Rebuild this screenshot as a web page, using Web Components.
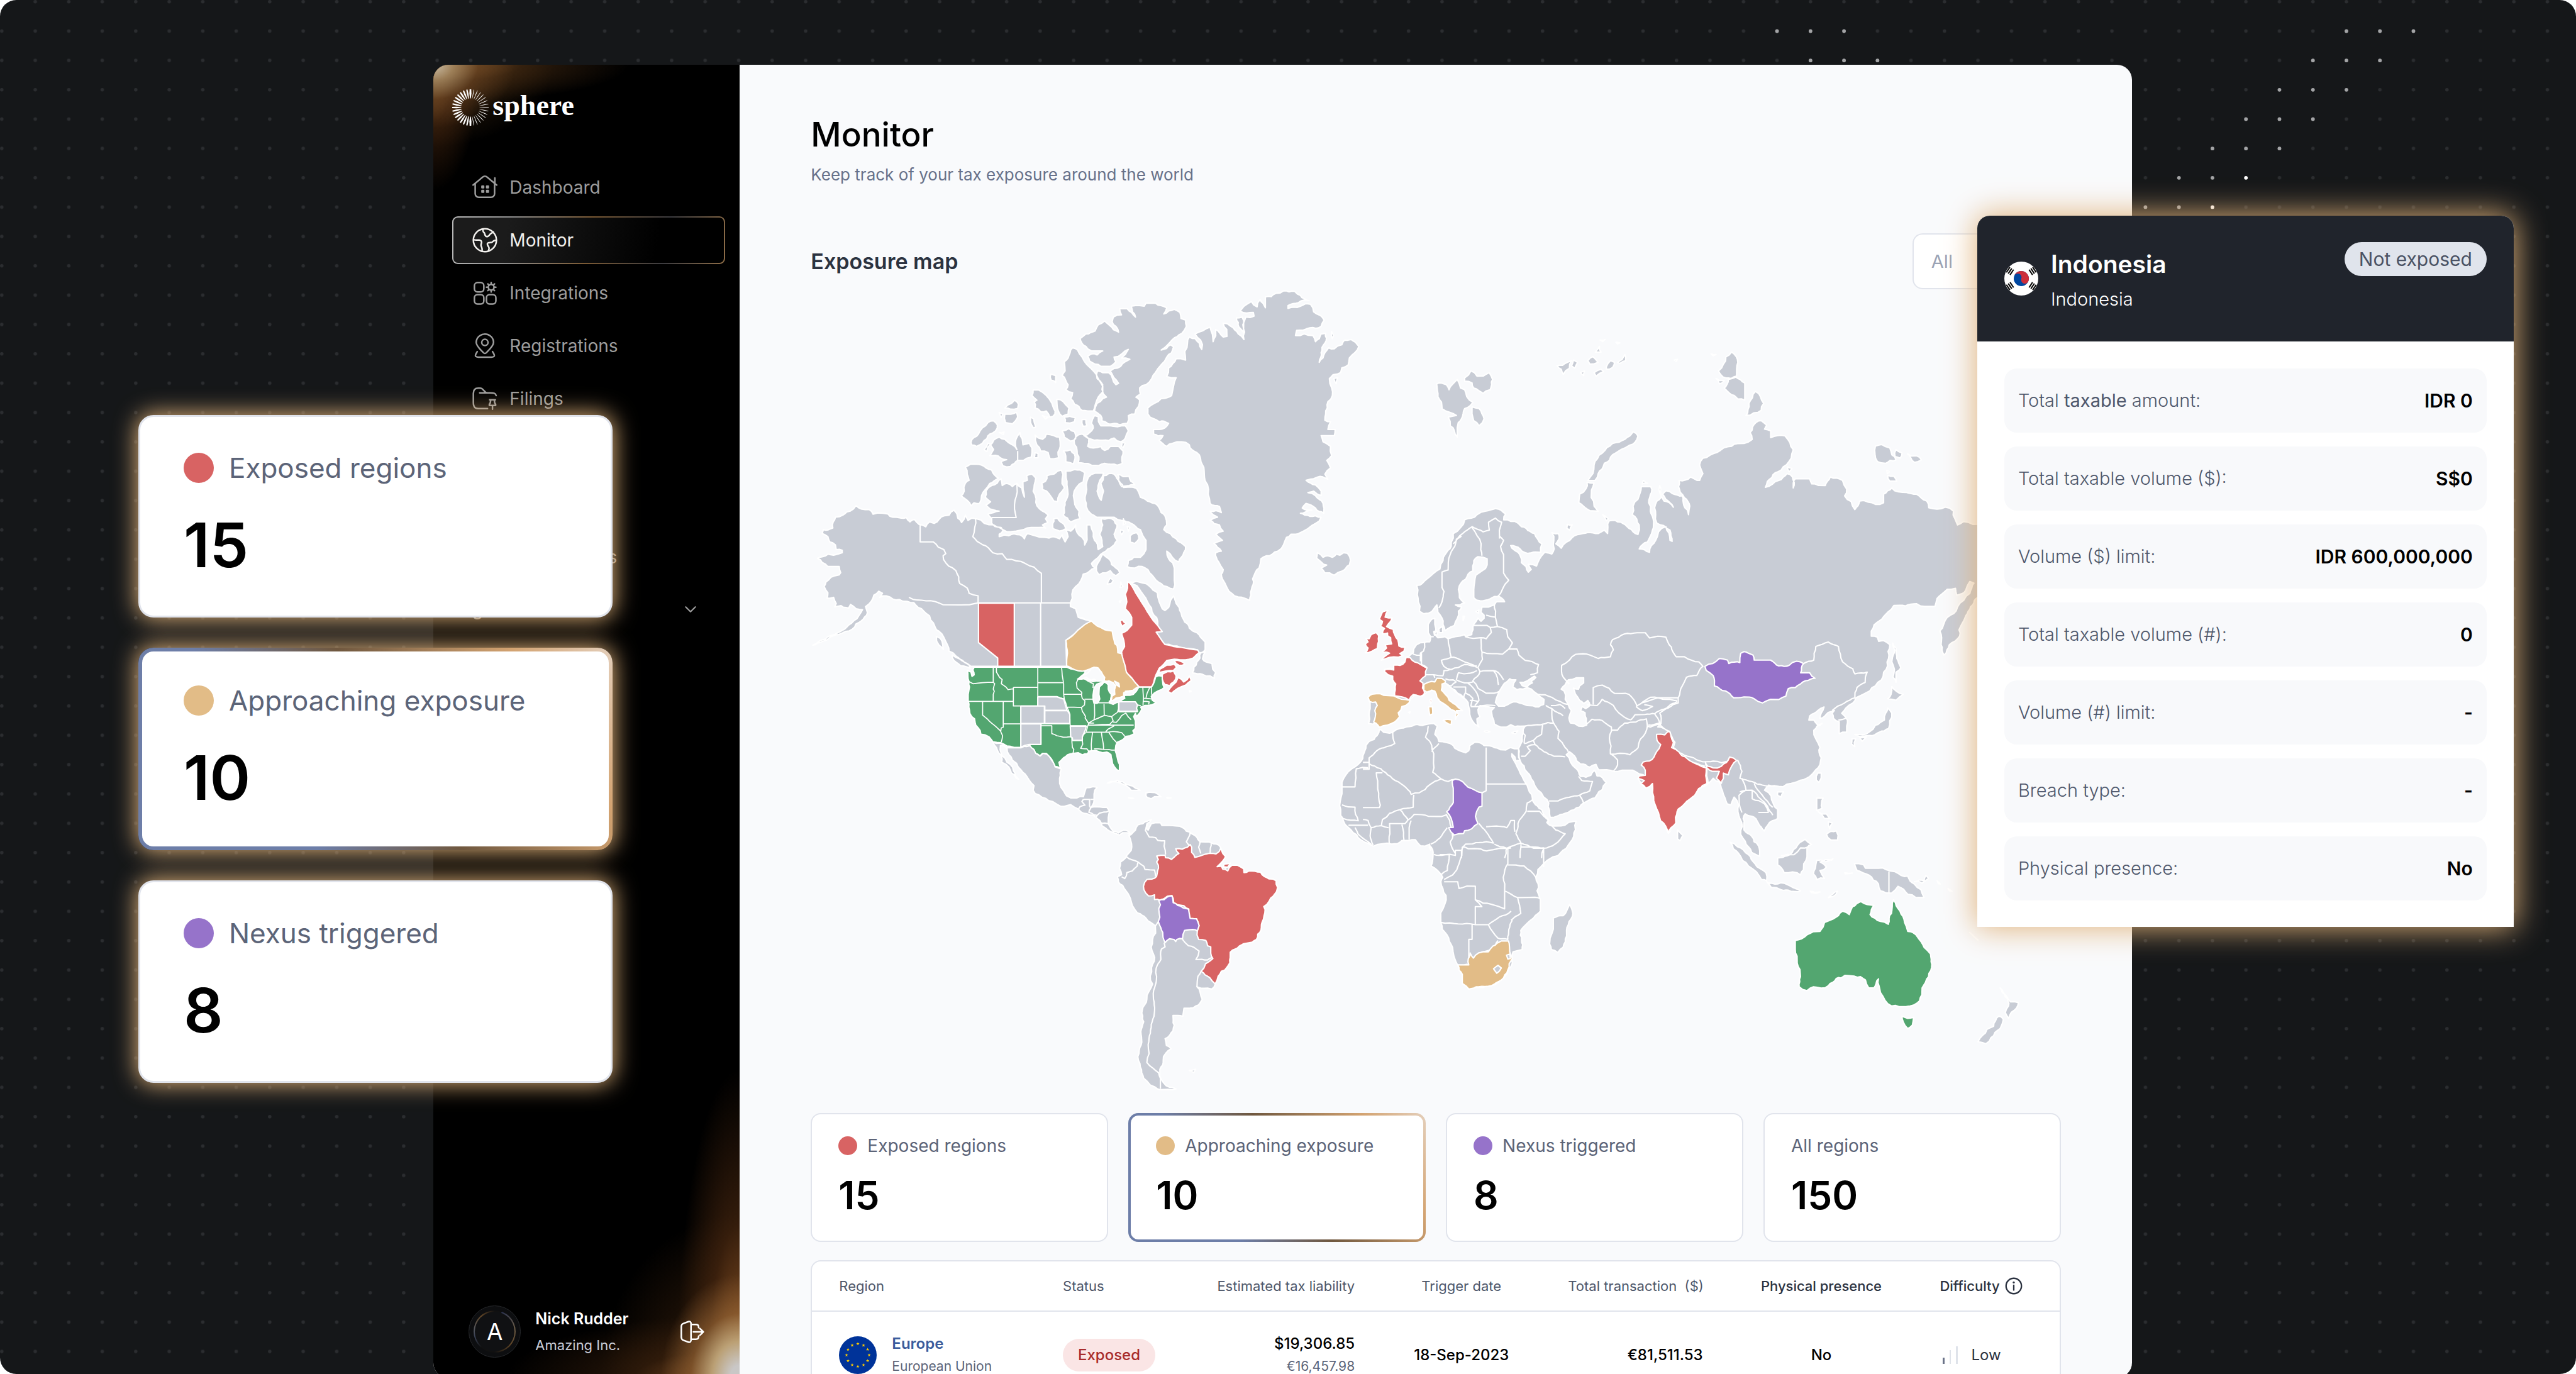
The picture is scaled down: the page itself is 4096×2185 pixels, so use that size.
<!DOCTYPE html>
<html lang="en">
<head>
<meta charset="utf-8">
<title>Sphere – Monitor</title>
<style>
html,body{margin:0;background:#fff;font-family:Inter,"Liberation Sans",sans-serif}
</style>
</head>
<body>
<monitor-page></monitor-page>
<script>
const define=(name,html,setup)=>{
  const t=document.createElement('template');t.innerHTML=html;
  customElements.define(name,class extends HTMLElement{
    constructor(){super();this.attachShadow({mode:'open'}).append(t.content.cloneNode(true));}
    connectedCallback(){if(setup&&!this.ready){this.ready=true;setup(this,this.shadowRoot);}}
  });
};

/* ---------- icons ---------- */
const ICONS={
home:'<path d="M1.5 19.5 20 4.200a6 6 0 0 1 8 0l18.500 15.300M43 6v11M5.500 17v19a7 7 0 0 0 7 7h23a7 7 0 0 0 7-7V17"/><g fill="currentColor" stroke="none"><rect x="17" y="20" width="6" height="6" rx="1.500"/><rect x="26" y="20" width="6" height="6" rx="1.500"/><rect x="17" y="28.500" width="6" height="6" rx="1.500"/><rect x="26" y="28.500" width="6" height="6" rx="1.500"/></g>',
globe:'<circle cx="24" cy="24" r="22"/><path d="M20.500 2.500c-1 4 0 5.500 2 7 1.500 1.500 1 3 2 5 1 2.500 3 3 5.500 2 2.500-1 3-4 6-5.500 2-1.500 3.500-1.500 4-3M2.500 23c3 1.500 7 .5 10.500.8 3.500.4 5 2.200 4.500 5.200-.5 2.500-1.500 3.800-.5 6.500 1 2.500 2.500 4.500 1.500 9.500M45.500 24c-3.500-.5-5.500 1.500-7.500 3.500-2 1.500-5 .5-7.500 1.500-2.500.8-2 2.500-1 5 1 2 2.500 2.500 2.500 5.500 0 2-1 3-1.500 5.200"/>',
grid:'<rect x="4" y="4" width="18" height="18" rx="6"/><rect x="4" y="27" width="18" height="18" rx="6"/><rect x="27" y="27" width="18" height="18" rx="6"/><circle cx="36" cy="13" r="5.500"/><path d="M36 7.500V4m0 18v-3.500M30.500 13H27m18 0h-3.500M32.100 9.100l-2.500-2.500m12.800 12.800-2.500-2.500m0-7.800 2.500-2.500M29.600 19.400l2.500-2.500"/>',
pin:'<path d="M24 38.500c-2 0-2.600-1.400-4.500-3.200C12 28 7.500 23 7.500 17.500a16.500 16 0 0 1 33 0C40.500 23 36 28 28.500 35.300c-1.900 1.800-2.500 3.200-4.500 3.200Z"/><circle cx="24" cy="17.500" r="6"/><path d="M9.500 35c-2 3-5 7-3 9 1 1.500 3 1.500 5 1.500h25c2 0 4 0 5-1.500 2-2-1-6-3-9"/>',
folder:'<path d="M14 13h20c7 0 10 0 11.500 5M29 43H15C5 43 2 41 2 31V14C2 7 5 4 11 4h4c7 0 7 9 14 9"/><path d="M33 26h11M35 26c0 4 0 6-2.500 9v2h12v-2C42 32 42 30 42 26M38.500 37v7"/>',
logout:'<path d="M17.500 4.500 8 8c-3 1-4 3-4 6v20c0 3 1 5 4 6l9.500 3.500c3 1 5-.5 5-3.500V8c0-3-2-4.500-5-3.500ZM22.500 10H32c3 0 5 2 5 5v1M37 32v1c0 3-2 5-5 5h-9.500M27 24h19m-6.500-6.500L46 24l-6.500 6.500"/>',
chevron:'<path d="m10 17 14 14 14-14"/>',
info:'<circle cx="24" cy="24" r="21"/><path d="M24 22v13"/><circle cx="24" cy="14.500" r="2.800" fill="currentColor" stroke="none"/>'
};
define('ui-icon','<style>:host{display:block;width:40px;height:40px;flex:none}svg{display:block;width:100%;height:100%;overflow:visible;stroke-width:var(--w,3)}</style><svg viewBox="0 0 48 48" fill="none" stroke="currentColor" stroke-linecap="round" stroke-linejoin="round" aria-hidden="true"></svg>',
(h,r)=>{r.querySelector('svg').innerHTML=ICONS[h.getAttribute('name')]});

/* ---------- sidebar ---------- */
define('brand-logo',`<style>:host{display:flex;align-items:center;gap:6px;color:#fff;height:58px}
svg{width:58px;height:58px}span{font:700 46px/58px "Liberation Serif",serif;padding-bottom:6px}</style><svg viewBox="-34 -34 68 68" fill="#fff" aria-hidden="true"></svg><span>sphere</span>`,
(h,r)=>{let s='';for(let i=0;i<32;i++){const a=i*11.25,c=Math.sin(a*Math.PI/180),w=Math.abs(c)<.05?1.900:c<0?1.500:.6;
 s+=`<path transform="rotate(${a})" d="M${-w*.4} -17L${-w} -26L${-w*.8} -34H${w*.8}L${w} -26L${w*.4} -17z"/>`}
 r.querySelector('svg').innerHTML=s});

define('nav-item',`<style>:host{display:block;color:#9d9d9d}
a{display:flex;align-items:center;gap:19px;height:76px;box-sizing:border-box;padding:0 30px;border:2px solid transparent;border-radius:9px;color:inherit;text-decoration:none;font-size:28px;line-height:36px}
:host([current]){color:#f3f1ee}
:host([current]) a{background:linear-gradient(100deg,#1b1b1b 20%,#000 75%) padding-box,linear-gradient(100deg,#b9b9b9,#8d8d8d 22%,#7b5a34 50%,#3c3c40 78%,#8e6d47) border-box}
:host([inset]) a{padding-left:90px}
</style><a href="#"><slot name="icon"></slot><slot></slot></a>`,(h,r)=>{if(h.hasAttribute('current'))r.querySelector('a').setAttribute('aria-current','page')});

define('side-bar',`<style>
:host{display:flex;flex-direction:column;box-sizing:border-box;width:487px;flex:none;padding:39px 23px 32px 30px;
background:radial-gradient(ellipse 130px 100px at 0 0,#cbbfa8,#a98c64d0 25%,#6f472480 55%,transparent),
radial-gradient(ellipse 310px 60px at 0 0,#7d5328,#4a2e14a0 45%,transparent),
radial-gradient(ellipse 75px 200px at 0 0,#7d5328,#4a2810a0 45%,transparent),
radial-gradient(ellipse 190px 130px at 0 0,#402810,transparent),
radial-gradient(ellipse 125px 165px at 100% 100%,#c9c7c6 12%,#c0a67af0 35%,#9c6a3890 62%,transparent),
radial-gradient(ellipse 100px 490px at 100% 100%,#8a5426,#4a2810b0 50%,transparent),
radial-gradient(ellipse 370px 100px at 100% 100%,#7d4d24,#40240e90 45%,transparent),
radial-gradient(ellipse 220px 260px at 100% 100%,#3c220d,transparent),#000}
nav{display:flex;flex-direction:column;gap:8px;margin-top:60px}
.last{margin-top:168px}
.group{display:flex;align-items:center;justify-content:space-between;height:74px;border:0;background:none;color:#9d9d9d;font:400 28px/36px Inter,sans-serif;padding:0 42px 0 0}
.group ui-icon{width:26px;height:26px;--w:4}
footer{display:flex;align-items:center;margin-top:auto;padding:0 33px 0 26px}
.avatar{width:83px;height:83px;box-sizing:border-box;border:1px solid #26282b;border-radius:50%;background:#0d0e10;display:grid;place-items:center;flex:none}
.avatar span{width:67px;height:67px;box-sizing:border-box;border:2px solid transparent;border-radius:50%;display:grid;place-items:center;color:#fff;font-size:37px;line-height:40px;
background:linear-gradient(#101113,#101113) padding-box,conic-gradient(from 20deg,#2c3450,#6a5c48 60deg,#5e4426 110deg,#111 160deg,#111 200deg,#3a4256 235deg,#55565a 260deg,#5e4426 300deg,#111 340deg) border-box}
.who{flex:1;margin-left:23px;display:flex;flex-direction:column;gap:6px}
b{color:#fff;font-weight:600;font-size:25px;line-height:36px}
small{color:#c9cdd8;font-size:22px;line-height:36px}
.out{border:0;background:none;padding:0;color:#fff}
</style>
<brand-logo></brand-logo>
<nav aria-label="Main">
<nav-item><ui-icon slot="icon" name="home"></ui-icon>Dashboard</nav-item>
<nav-item current><ui-icon slot="icon" name="globe"></ui-icon>Monitor</nav-item>
<nav-item><ui-icon slot="icon" name="grid"></ui-icon>Integrations</nav-item>
<nav-item><ui-icon slot="icon" name="pin"></ui-icon>Registrations</nav-item>
<nav-item><ui-icon slot="icon" name="folder"></ui-icon>Filings</nav-item>
<nav-item class="last" inset>Transactions</nav-item>
<button class="group" type="button">Organization<ui-icon name="chevron"></ui-icon></button>
</nav>
<footer><div class="avatar"><span>A</span></div><div class="who"><b>Nick Rudder</b><small>Amazing Inc.</small></div><button class="out" type="button" aria-label="Log out"><ui-icon name="logout"></ui-icon></button></footer>`);

/* ---------- stat card ---------- */
define('stat-card',`<style>
:host{display:block;box-sizing:border-box;height:205px;--b:2px;--px:44px;border:var(--b) solid #e1e4ec;border-radius:16px;background:#fff;padding:calc(33px - var(--b)) calc(var(--px) - var(--b))}
:host([active]){--b:4px;border-color:transparent;background:linear-gradient(#fff,#fff) padding-box,linear-gradient(58deg,#6d7ea8 30%,#70583f 54%,#d3a371 83%,#e4cfbb) border-box}
p{margin:0;display:flex;align-items:center;gap:16px;color:#5c6478;font-size:28px;line-height:38px}
i{width:30px;height:30px;border-radius:50%;flex:none;background:var(--dot)}
strong{display:block;margin-top:22px;color:#000;font-weight:600;font-size:62px;line-height:76px}
:host([size=large]){height:322px;--b:3px;--px:72px;border-radius:24px;padding:calc(59px - var(--b)) calc(var(--px) - var(--b));box-shadow:0 0 36px 2px rgb(224,178,122)}
:host([size=large][active]){--b:6px}
:host([size=large]) p{gap:24px;font-size:44px;line-height:50px}
:host([size=large]) i{width:48px;height:48px}
:host([size=large]) strong{margin-top:42px;font-size:98px;line-height:112px}
:host([tone=red]){--dot:#d86363}:host([tone=amber]){--dot:#e2bc87}:host([tone=violet]){--dot:#9673ca}
</style><p><i></i><span><slot></slot></span></p><strong></strong>`,(h,r)=>{r.querySelector('strong').textContent=h.getAttribute('value');if(!h.hasAttribute('tone'))r.querySelector('i').remove()});

/* ---------- map ----------
   Outlines are written in the coordinates of five survey sheets; each letter
   in a string switches the sheet, and all of them land in one plane. */
const SHEET={A:[1480,520,.7015,.574],B:[1780,1200,.3954,.3954],C:[2500,520,.7653,.6378],D:[2540,1000,.38265,.38265],E:[1980,1400,1.2117,.4209]};
let sheet=SHEET.A;
const pts=s=>{const o=[];for(const t of s.trim().split(/\s+/)){if(SHEET[t]){sheet=SHEET[t];continue}const [x,y]=t.split(',').map(Number);o.push([sheet[0]+x*sheet[2],sheet[1]+y*sheet[3]])}return o};
const rough=(a,b,k,out)=>{const dx=b[0]-a[0],dy=b[1]-a[1],l=Math.hypot(dx,dy);
 if(l<9||k===0||Math.abs(dx)<.6||Math.abs(dy)<.6){out.push(b);return}
 const h=Math.sin((a[0]+b[0])*12.9898+(a[1]+b[1])*78.233)*43758.5453,f=(h-Math.floor(h)-.5)*2*k;
 const s=(dx>0||(dx===0&&dy>0))?1:-1,m=[(a[0]+b[0])/2-dy*f*s,(a[1]+b[1])/2+dx*f*s];
 rough(a,m,k,out);rough(m,b,k,out)};
const line=(s,k,close)=>{const p=pts(s),o=[p[0]];for(let i=1;i<p.length;i++)rough(p[i-1],p[i],k,o);if(close)rough(p[p.length-1],p[0],k,o);
 return 'M'+o.map(q=>q[0].toFixed(1)+' '+q[1].toFixed(1)).join('L')+(close?'Z':'')};
const path=(list,k,close)=>list.split(';').filter(x=>x.trim()).map(s=>line(s,k,close)).join('');

const LAND=`A 165,737 178,748 200,750 210,765 235,762 262,775 285,778 298,776 308,790 320,782 332,798 350,806 360,790 372,795 385,782 400,770 412,768 425,752 435,778 445,792 455,768 462,785 472,778 484,780 505,795 530,800 550,808 555,818 545,830 545,838 570,835 600,832 612,845 620,828 640,835 665,840 690,838 705,845 712,832 720,855 728,838 722,815 735,820 748,800 752,825 765,840 772,865 778,830 778,800 788,800 795,825 798,850 808,880 820,870 818,850 812,830 820,800 816,780 835,778 850,785 858,800 850,830 858,850 840,875 828,885 815,895 808,905 790,925 800,940 785,950 768,960 762,980 748,1000 738,1025 735,1050 734,1065 748,1072 755,1100 775,1108 790,1112 722,1175 724,1259 470,1259 460,1250 445,1240 430,1225 412,1210 408,1190 398,1165 385,1145 370,1118 360,1095 345,1080 330,1068 318,1052 300,1048 280,1042 262,1040 245,1030 228,1035 235,1022 225,1015 212,1028 205,1048 190,1065 195,1085 178,1112 155,1138 120,1155 75,1178 50,1190 70,1175 95,1160 120,1148 135,1138 145,1125 160,1110 172,1095 182,1075 165,1072 150,1058 145,1070 138,1068 125,1062 108,1066 112,1055 105,1035 88,1038 90,1020 85,1012 80,1000 85,985 98,970 120,962 124,955 120,935 90,935 75,922 62,908 90,895 105,898 128,890 128,882 112,880 110,865 95,855 90,838 75,828 78,815 103,810 104,790 110,775 130,768 140,758 158,748;
893,985 925,988 945,1000 965,1020 970,1050 978,1072 985,1078 995,1068 1000,1045 1008,1030 1015,1055 1028,1085 1035,1108 1050,1135 1070,1150 1080,1165 1092,1180 1092,1205 1082,1215 1075,1214 1072,1206 985,1188 962,1148 978,1146;
1080,1216 1092,1212 1085,1235 1095,1245 1110,1250 1112,1268 1120,1280 1116,1298 1105,1290 1085,1285 1058,1280 1062,1262 1070,1245;
420,1222 440,1235 465,1255 468,1266 450,1258 425,1240;378,1162 388,1168 397,1205 385,1190;
455,612 485,603 510,615 525,622 543,648 520,665 508,685 498,705 493,730 478,728 470,738 460,720 444,706 452,690 455,665 465,655 460,635;
510,690 525,672 550,650 553,672 565,665 580,675 592,665 605,680 612,710 608,660 620,655 618,640 632,635 642,648 638,670 635,690 643,715 645,738 660,755 675,768 668,780 674,792 660,800 668,810 650,808 630,808 610,815 590,820 565,822 545,808 525,795 525,778 515,765 530,760 545,755 515,742 510,735 522,725 508,710;
472,540 470,532 490,505 500,485 515,468 530,462 540,475 535,495 520,505 512,520 500,535 485,545;
520,575 530,555 522,540 530,525 545,515 560,522 580,540 592,555 590,520 600,500 606,520 608,540 625,535 632,550 630,580 610,590 595,590 575,610 555,608 550,595 565,588 548,582;
505,555 515,535 522,537 512,562;560,420 578,405 586,395 596,408 594,422 575,424;560,440 590,434 594,450 580,472 562,468;545,435 555,440 550,452;545,500 558,498 556,506;
635,362 650,362 670,380 685,405 693,440 680,450 670,430 655,432 640,420 638,400 645,395 632,380;660,445 675,450 668,456;698,392 715,400 730,420 728,440 712,447 702,430;718,450 747,452 745,465 720,468;765,458 775,458 778,478 768,480;628,450 636,455 642,482 636,485;682,310 695,315 695,338 683,330;
640,508 660,522 670,505 690,510 705,515 707,545 703,582 680,585 675,565 655,560 645,540;640,565 648,568 648,582 638,582;
715,560 735,556 745,570 742,602 722,595;712,495 730,487 745,497 748,520 735,528 718,515;
748,515 765,505 783,520 780,545 795,550 815,545 825,558 840,545 862,545 874,560 872,600 858,606 825,600 810,607 790,606 770,600 755,598 752,560;
770,510 785,500 795,485 790,470 798,445 808,448 815,478 830,478 848,480 870,478 880,478 888,495 880,518 868,530 850,518 820,525 790,522;872,532 879,535 875,548 870,545;
740,225 753,232 765,255 778,280 795,300 808,325 820,350 820,368 808,385 800,410 795,430 765,428 745,408 735,390 740,370 722,360 728,345 712,315 720,300 718,270 728,258;
930,90 935,80 960,80 990,95 982,115 1010,100 1025,110 1028,130 1040,135 1042,155 1030,178 1005,198 975,232 1000,215 1008,222 990,255 975,280 960,305 950,325 935,345 918,355 920,375 908,385 918,395 915,415 905,440 888,445 885,470 865,475 835,472 818,462 815,445 798,430 805,405 820,390 830,385 818,360 820,345 805,325 806,300 835,305 855,345 862,340 840,300 850,292 880,270 892,262 870,258 888,230 870,245 850,255 855,270 840,285 815,285 800,278 785,268 780,252 790,245 805,248 820,235 790,235 775,220 765,210 760,195 775,180 800,170 808,150 825,138 838,152 862,174 845,140 848,125 870,118 865,98 885,98 907,125 896,90 918,88;
722,625 745,620 772,630 768,660 750,678 742,705 745,725 757,755 760,780 745,785 735,790 715,768 720,735 728,700 725,670;
672,640 690,635 700,625 710,622 712,650 718,680 705,700 700,725 690,722 678,700 660,685 658,665 668,658;
782,645 800,632 822,632 812,655 805,690 816,720 822,690 815,665 822,640 850,635 858,650 875,678 910,682 920,710 945,725 970,745 985,770 990,800 982,815 1015,845 1040,870 1035,890 1022,920 1005,905 990,885 995,910 1010,940 1010,980 1008,1008 990,1000 962,980 940,945 925,935 905,940 885,935 888,915 920,905 935,880 935,850 920,815 895,795 870,785 850,775 820,775 790,765 776,740 775,700 776,670;
860,636 890,642 905,670 890,672 870,675 862,655;820,895 838,912 855,940 865,955 855,965 840,948 830,955 810,962 803,935;840,972 848,980 843,990 832,992;868,985 874,1000 866,1003;893,835 910,825 916,845 905,860 893,855;690,780 700,778 718,800 722,812 705,820 688,812;875,780 880,795 874,800;885,805 892,808 888,820;868,815 876,820 870,832;
1252,60 1280,48 1300,40 1330,42 1345,55 1368,72 1340,78 1312,88 1312,97 1345,90 1372,84 1380,108 1398,120 1408,135 1400,155 1370,160 1335,168 1332,185 1355,180 1378,185 1385,205 1400,180 1412,178 1410,210 1400,240 1395,272 1405,258 1420,225 1435,228 1455,215 1462,200 1480,198 1500,220 1490,240 1475,258 1472,280 1455,290 1452,305 1432,312 1422,325 1428,355 1430,380 1418,400 1412,440 1410,460 1425,465 1418,490 1437,490 1435,510 1400,510 1405,530 1425,545 1428,575 1415,590 1425,615 1410,635 1418,652 1390,645 1380,650 1360,655 1385,670 1400,690 1400,705 1380,690 1365,695 1385,705 1405,730 1407,762 1385,745 1360,730 1350,745 1375,752 1345,762 1370,772 1400,775 1385,795 1365,812 1345,825 1320,830 1308,840 1300,865 1285,885 1270,895 1255,900 1240,910 1235,940 1225,955 1218,975 1215,1010 1210,1045 1190,1035 1170,1030 1155,1015 1145,990 1135,960 1140,945 1128,920 1120,890 1135,885 1115,860 1138,850 1120,830 1140,820 1130,800 1105,785 1125,775 1105,755 1135,760 1130,740 1105,730 1100,700 1090,640 1085,605 1070,565 1050,540 1030,530 1005,535 990,545 970,525 980,510 955,505 955,490 985,485 995,470 970,465 955,455 940,440 940,420 975,390 1003,380 1008,350 1015,322 990,318 995,290 1015,260 1040,265 1045,210 1050,190 1065,195 1083,230 1080,200 1065,180 1085,170 1105,158 1113,205 1120,165 1140,190 1150,188 1140,145 1160,155 1180,180 1195,198 1192,150 1200,125 1222,122 1220,110 1185,105 1195,90 1215,75 1230,92 1238,68 1252,95;
1175,128 1190,125 1194,175 1182,158;1434,325 1444,322 1440,342;1428,172 1433,185 1430,195;
1390,890 1405,905 1418,900 1430,905 1440,895 1450,898 1460,890 1470,892 1478,915 1475,930 1455,950 1435,963 1410,955 1400,940 1415,930 1400,920 1388,908;
B 178,466 215,470 245,492 280,492 310,492 325,485 352,482 372,500 385,520 402,530 415,518 435,522 455,550 472,582 500,592 495,610 493,660 512,695 525,718 545,728 575,728 605,722 618,680 650,675 670,678 655,710 655,740 648,762 642,772 680,770 715,772 728,790 722,820 722,850 732,868 745,885 770,893 795,880 820,888 828,902 812,892 790,892 775,903 755,895 730,885 710,870 692,858 690,848 670,825 650,810 620,802 595,795 580,780 545,760 515,768 480,758 440,740 410,725 378,708 368,692 372,670 350,645 330,615 310,595 290,565 270,550 255,525 245,495 214,480 218,520 235,540 245,560 260,570 275,600 300,640 288,635 265,610 262,600 240,570 220,560 222,545 205,515 180,470;
718,658 735,650 765,645 790,652 820,668 850,682 872,692 830,692 820,680 790,662 760,652 740,652;900,705 930,702 955,710 970,722 940,722 925,732 905,725 900,718;818,727 842,730 832,732;998,726 1018,728 1000,730;
830,900 850,880 862,855 885,850 905,838 925,830 905,848 900,870 910,880 925,850 945,845 968,845 975,858 1010,858 1040,860 1060,862 1080,872 1090,885 1108,890 1112,895 1130,905 1145,925 1155,935 1205,938 1230,945 1252,962 1262,990 1275,1005 1262,1025 1245,1050 1275,1060 1300,1050 1330,1045 1360,1062 1362,1080 1385,1072 1440,1078 1480,1110 1513,1118 1520,1150 1515,1170 1500,1190 1480,1215 1455,1240 1453,1300 1442,1350 1420,1395 1400,1408 1360,1415 1320,1440 1297,1455 1295,1505 1270,1540 1255,1545 1240,1568 1226,1605 1210,1629 1140,1618 1155,1645 1165,1677 1134,1709 1079,1719 1073,1757 1027,1753 1033,1799 1011,1847 990,1863 996,1895 1018,1911 981,1964 965,2007 965,2039 1011,2092 1042,2099 965,2103 920,2081 889,2049 873,1996 867,1932 880,1879 889,1783 904,1677 926,1528 935,1464 944,1331 900,1295 860,1270 848,1255 830,1215 805,1165 790,1140 770,1125 765,1100 785,1090 782,1075 775,1060 780,1030 805,1010 808,1000 830,975 832,945 820,905;
C 375,672 400,688 395,705 430,715 470,745 488,775 485,800 460,802 435,790 412,780 430,800 438,830 455,858 462,850 455,835 475,840 482,820 495,800 512,805 518,790 512,742 528,745 530,760 522,775 535,788 548,770 575,748 600,742 625,745 640,735 648,745 652,708 680,712 700,730 722,748 725,720 708,690 710,665 722,645 730,608 753,608 755,625 748,655 752,680 760,710 755,745 745,770 725,790 750,800 765,765 772,740 790,725 800,765 805,768 800,735 785,722 768,715 765,690 768,650 778,640 775,605 785,650 808,668 800,655 782,630 790,620 805,628 830,635 845,690 848,665 835,640 825,625 822,590 850,580 872,590 880,570 872,545 880,525 915,508 950,490 980,482 1000,470 995,450 1010,420 1022,415 1035,428 1030,440 1045,445 1045,465 1080,460 1092,480 1100,500 1095,525 1070,560 1032,610 1065,590 1085,570 1098,580 1100,612 1105,585 1140,585 1145,600 1178,605 1190,580 1220,590 1230,615 1225,635 1250,675 1262,650 1300,660 1320,655 1320,630 1340,612 1375,625 1400,630 1425,650 1430,670 1470,668 1490,680 1500,720 1515,710 1560,715 1600,720 1600,900 1545,935 1520,985 1510,1010 1505,1045 1480,1070 1467,1100 1460,1070 1457,1030 1475,990 1500,960 1530,920 1540,890 1530,885 1520,910 1498,925 1495,905 1475,908 1450,935 1445,958 1420,958 1400,950 1345,955 1330,975 1310,1000 1290,1030 1290,1045 1305,1048 1308,1060 1320,1058 1335,1070 1332,1110 1320,1150 1300,1190 1270,1215 1252,1225 1245,1240 1228,1255 1218,1270 1232,1290 1230,1325 1212,1330 1212,1295 1198,1285 1195,1270 1200,1262 1185,1268 1165,1285 1168,1270 1175,1252 1160,1262 1140,1278 1138,1290 1150,1290 1160,1305 1170,1300 1150,1320 1155,1345 1165,1370 1168,1400 1155,1435 1140,1455 1110,1470 1095,1475 1075,1485 1055,1482 1040,1480 1030,1495 1046,1512 1062,1551 1062,1578 1038,1597 1030,1614 1015,1591 999,1571 983,1564 978,1578 980,1611 999,1630 1015,1657 1018,1688 999,1677 983,1644 972,1624 970,1578 967,1538 956,1515 948,1538 939,1535 928,1498 923,1479 920,1470 905,1460 893,1475 870,1490 860,1510 835,1535 820,1550 817,1558 814,1591 796,1621 777,1584 764,1538 758,1489 755,1480 740,1488 728,1472 722,1460 735,1450 715,1440 D 1300,1140 1225,1147 1148,1138 1135,1112 1105,1125 1060,1110 1030,1070 1005,1050 990,1065 1010,1100 1035,1130 1060,1170 1110,1165 1128,1140 1140,1168 1165,1175 1185,1200 1165,1235 1140,1260 1130,1275 1075,1300 1055,1320 1000,1345 950,1362 912,1370 905,1300 880,1270 850,1235 830,1195 800,1150 765,1092 760,1060 758,1035 770,1010 780,960 790,925 740,928 720,918 700,930 670,930 640,915 630,880 625,850 640,835 600,830 570,825 560,845 570,880 555,890 565,930 545,915 525,885 520,850 505,800 490,785 460,765 440,745 425,735 400,715 385,720 382,750 400,770 420,800 440,815 450,820 485,850 470,845 455,850 465,870 450,885 455,860 430,845 400,820 375,805 360,785 350,755 335,750 310,760 290,780 250,775 230,795 225,810 190,830 172,860 178,880 155,905 120,920 80,932 65,910 28,912 30,870 35,810 30,800 25,785 45,770 100,775 150,778 160,760 158,720 145,700 140,680 105,660 105,650 150,645 152,630 180,630 205,610 210,590 225,585 245,570 260,530 300,518 325,515 330,490 318,470 318,430 335,405 350,400 350,430 355,450 350,475 365,495 400,490 415,500 450,490 495,480 500,490 530,480 540,430 560,400 575,415 590,400 590,385 575,370 580,345 640,335 650,320 690,320 685,310 665,295 620,305 570,315 540,300 540,260 550,190 605,140 605,110 560,100 540,120 535,170 500,210 480,225 465,260 470,300 495,325 450,335 480,345 465,365 460,400 445,435 415,450 400,460 390,430 365,370 360,335 345,355 320,375 295,378 275,365 270,320 265,285 262,240 310,210 340,185 375,160 390,120 400,90 430,50 440,10 C 272,745 290,728 300,705 330,690 350,680;
D 345,465 360,460 362,480 348,482;370,450 388,440 388,470 372,470;488,390 495,390 488,412;590,950 618,952 605,956;725,958 755,948 742,962;550,368 565,360 562,375;
C 600,590 615,545 635,510 660,482 690,470 710,448 722,460 715,478 690,495 660,515 640,540 625,570 617,590;598,595 615,598 608,640 615,665 625,680 600,675 578,655 580,630 595,615;550,718 562,720 556,735 549,730;636,690 650,702 645,708;
232,308 255,310 262,325 270,310 282,295 290,320 300,325 305,345 320,362 300,380 292,410 282,463 265,430 260,405 280,400 262,390 245,380 235,345;300,290 315,270 330,285 360,275 368,295 362,325 345,335 322,320 318,305 300,300;318,375 335,380 347,410 335,430 322,415;
525,255 550,245 560,240 555,262 540,280;565,238 575,245 568,262 560,255;600,240 612,228 625,245 605,250;618,215 628,198 632,215;645,258 655,240 665,245 660,260 645,265;672,245 690,222 692,240 678,248;615,275 632,265 638,272 620,285;630,180 642,178 636,184;668,186 678,188 672,191;582,275 592,270 590,284;810,238 818,236 815,242;900,220 912,222 905,226;
950,215 965,245 962,285 935,290 918,270 930,250;932,320 942,295 960,288 982,305 982,355 965,352 945,335;985,400 992,365 1008,330 1028,365 1022,385;912,292 932,298 920,308;1085,550 1097,555 1090,565;735,590 745,598 732,600;
1300,490 1315,485 1335,495 1340,515 1350,530 1325,540 1305,535;1350,500 1365,510 1360,525 1348,520;1378,512 1400,518 1412,530 1395,537;1330,575 1345,578 1352,592 1335,592;1328,560 1334,565 1329,570;
1342,1065 1350,1080 1352,1110 1362,1138 1350,1150 1350,1180 1343,1165 1340,1120;1340,1192 1350,1205 1368,1215 1350,1232 1330,1228 1338,1215;1330,1255 1340,1270 1332,1315 1310,1325 1285,1335 1262,1338 1250,1332 1285,1325 1300,1305 1322,1290 1325,1270;1243,1345 1252,1345 1250,1368 1242,1360;1262,1342 1278,1340 1268,1352;1160,1445 1168,1445 1162,1472 1156,1465;1062,1500 1077,1500 1070,1515 1062,1510;
E 946,350 954,375 950,398 946,390;1027,405 1038,425 1055,460 1065,500 1082,540 1083,575 1075,570 1055,510 1040,455;1083,580 1100,590 1120,600 1135,620 1120,622 1090,605;1100,475 1115,465 1128,430 1142,392 1152,415 1145,430 1145,470 1140,500 1135,550 1110,540 1100,505;1158,520 1160,485 1185,478 1183,485 1165,492 1175,515 1165,530 1172,565 1160,570 1155,545;1160,210 1170,210 1168,255 1160,265;1162,270 1175,280 1180,300 1172,300;1175,370 1190,355 1192,395 1182,395;1178,315 1184,320 1180,345;1150,622 1165,625 1152,628;1178,650 1192,622 1185,645;1203,540 1215,542 1204,545;
1218,500 1232,505 1235,520 1255,520 1280,535 1300,555 1310,590 1325,650 1300,635 1285,600 1275,630 1258,620 1255,590 1240,550 1222,530;1310,580 1325,575 1328,552 1332,565 1322,585;1345,575 1350,590 1347,588;1362,610 1368,622 1364,620;1395,805 1408,838 1402,825;
1442,1050 1450,1090 1458,1112 1470,1115 1467,1140 1455,1185 1450,1160 1455,1130;1440,1175 1447,1190 1442,1230 1428,1270 1420,1297 1408,1288 1415,1260 1432,1220;780,680 785,720 778,770 770,870 762,893 752,880 750,830 755,790 755,740 770,730;195,1415 205,1410 202,1425;
D 80,940 100,955 130,960 145,955 185,935 240,925 290,922 345,912 362,925 350,965 370,1000 405,1005 440,1020 460,1040 500,1055 515,1045 520,1020 545,1003 590,1020 640,1030 670,1040 720,1030 758,1035 765,1090 745,1095 725,1060 745,1110 775,1170 800,1215 825,1275 850,1315 880,1355 905,1380 895,1395 925,1412 1000,1395 1038,1388 1035,1430 1010,1490 960,1545 915,1568 E 740,500 728,560 730,620 735,660 735,710 720,750 705,795 707,880 693,890 692,940 680,1000 660,1040 625,1055 615,1030 615,990 608,950 600,870 582,760 588,680 590,640 582,580 585,560 567,510 570,460 565,420 D 330,1530 325,1500 280,1508 255,1478 190,1482 140,1500 95,1498 50,1510 0,1485 E 455,385 440,340 432,310 428,260 430,190 430,140 445,80 455,60 D 0,1070 15,1020 30,1000 70,970`;

const WATER=`D 650,790 660,765 680,730 700,710 715,695 725,700 745,700 735,715 730,735 750,748 780,745 800,738 820,745 850,770 882,795 880,820 855,832 800,825 750,808 720,812 690,828 660,828 645,810;765,712 800,705 835,682 842,688 820,705 825,715 800,733 775,728;1000,700 1040,690 1075,690 1075,715 1055,730 1050,745 1025,740 1035,770 1055,800 1075,815 1095,800 1105,825 1085,840 1068,830 1060,850 1082,860 1090,920 1050,925 1010,910 1003,885 1015,850 1000,820 985,795 980,755 965,745`;

const BORDERS=`A 335,798 335,855 370,855 383,872 398,880 403,893 396,900 397,912 430,948 440,990 460,1005 465,1022 489,1030 489,1053;305,1035 489,1053;482,778 475,838 528,890 553,893 565,912 657,957 657,1053;489,1053 585,1053;592,665 590,776 525,776;594,560 594,590;
B 605,735 634,735 634,768;605,735 598,745 612,762 590,768 582,780;638,735 655,735;634,768 640,775 630,798;640,772 680,770;665,818 680,800 700,795 728,788;630,795 655,808 668,810;690,848 722,850;822,888 815,898;
905,850 897,880 915,912 945,915 955,928 988,930 985,955 992,995;1108,892 1100,915 1090,935 1105,955;1155,935 1148,960 1158,990;1207,940 1202,990;808,1005 835,1020 862,1030 858,1050 835,1072 810,1080 800,1108 785,1100;862,1030 890,1050 895,1065 940,1068 945,1098;945,1330 958,1312;985,1410 990,1430 973,1440 970,1490 948,1530 950,1570 935,1677 929,1783 910,1890 904,1975 959,2023 968,2050 968,2099;1072,1395 1100,1425 1150,1450 1135,1490 1190,1492 1212,1480;1160,1545 1145,1568 1140,1618;
D 480,0 455,15 440,60 425,90 415,165 385,175 385,250 395,270 385,320 370,350;C 342,810 340,775 318,728;272,775 295,745 318,725 345,740 360,735 358,712 375,700 390,712 385,760;D 665,0 685,20 670,50 685,90 685,180 710,215 655,295;
640,335 645,395 600,385;645,395 655,440 620,445 605,435 540,435;620,445 625,470 600,500 575,495 500,490;655,440 700,455 705,490 728,520 710,550 680,575 580,565 575,500;710,550 750,550 760,580 790,605 855,625 850,665 815,675;580,565 582,600 560,640 570,660 635,655 660,665 685,700;570,660 535,705 560,740 600,765 640,765 665,755;635,655 655,690 660,725;455,700 495,715 535,710;415,500 430,590 480,605 555,640;430,590 382,605 395,635 430,650 465,640 495,625 555,632;285,570 285,625 312,640;305,675 345,675 390,680 395,655 430,648;300,520 295,560 280,570 280,610;245,575 280,580;345,675 350,690;455,700 460,680 465,665 520,668 555,655;402,695 440,700 455,710;440,735 500,735 500,765;410,725 430,730 455,710;510,715 555,765 565,800 545,825;445,745 490,790 500,760;500,765 535,790 525,830;520,800 560,805;525,830 565,830 645,825;330,490 345,490;
C 540,1165 536,1130 555,1115 570,1098 605,1100 625,1110 655,1105 662,1085 655,1070 660,1055 720,1035 740,1035 750,1050 790,1048 815,1105 835,1105 870,1120 880,1133 865,1160 840,1165 830,1190 820,1225 770,1225 730,1240;540,1165 555,1185;613,1245 613,1195 635,1188 665,1212 700,1215 720,1250;820,1225 820,1240 775,1270 778,1300 770,1310 800,1325 812,1355 808,1370 820,1385 880,1412 905,1410 925,1415 965,1408 975,1440 970,1460 1000,1470 1025,1480 1055,1482;1125,1125 1150,1115 1155,1075 1185,1062 1210,1075 1220,1120 1245,1140 1250,1155 1280,1150 1275,1180 1255,1195 1250,1225;1195,1262 1225,1240 1250,1225;1210,1290 1228,1285;820,1390 840,1410 885,1425;
D 790,925 850,918 900,908 928,910 920,870 920,840 890,825;850,770 920,785 960,805 1000,820;915,825 960,820 985,840;920,840 950,860 975,875;928,910 955,950 950,985 985,1030 1000,1050;875,920 870,965 830,995 785,1010;830,995 838,1015 930,1072 985,1075;770,1072 790,1072 815,1045 800,1025 838,1015;905,1290 950,1290 1005,1272 1055,1262 1105,1240 1118,1195 1065,1190 1050,1170;1055,1262 1075,1300;1090,915 1115,892 1165,898 1210,930 1210,950 1200,985 1205,1060 1240,1090 1240,1115 1220,1145;1210,945 1240,945 1275,910 1330,905 1380,890 1385,925 1375,960 1350,990 1340,1030 1300,1065 1205,1062;1090,820 1140,825 1165,795 1220,825 1245,860 1305,895;1305,895 1325,870 1420,865 1445,910 1390,920;1330,830 1375,800 1400,785 1480,795 1530,800;1330,830 1360,850 1410,830 1370,820;1420,865 1445,850 1530,805;780,960 790,970 785,1010;1385,925 1400,930 1445,915 1490,950;
C 970,1500 1000,1495 1020,1520 1050,1568;975,1460 985,1495 968,1510 975,1560;1000,1495 1000,1520 1030,1535 1040,1560;1005,1475 1025,1510 1050,1545;1015,1560 1040,1560;893,1475 890,1430;
E 1105,465 1125,460 1135,430 1148,425;1271,535 1271,630;
D 145,957 155,1010 115,1025 30,1080 30,1135 0,1135;0,1102 30,1102;30,1108 230,1245 235,1258 275,1250 380,1182 340,1150 345,1060 335,1020 305,980 318,925;335,1050 370,1010;380,1182 415,1195 450,1185 580,1250 600,1240 600,1030;600,1207 800,1207;95,1153 65,1153 85,1310 80,1322 0,1322;248,1260 245,1320 180,1332;180,1332 130,1350 95,1380 90,1410;180,1332 220,1380 205,1400 130,1400 128,1500;215,1385 250,1355 320,1365 405,1358;225,1478 225,1420 235,1385;200,1480 190,1405;40,1420 90,1410 125,1420;0,1380 25,1385 40,1420 35,1460 50,1505;565,1400 600,1440 635,1495 500,1500 480,1530;600,1415 650,1412 700,1420 720,1385 738,1385 740,1440;825,1285 800,1300 795,1340 755,1400 745,1450 770,1495 830,1520 880,1520;800,1340 860,1340 905,1385 900,1400 985,1450 935,1500 880,1520 870,1568;440,1455 425,1490 450,1545;640,1500 700,1520 770,1495;410,1420 375,1470 330,1500;700,1520 690,1568;770,1500 765,1568;345,1550 450,1555 450,1530 480,1530 480,1568;
E 587,580 608,580 610,610 635,600 635,660 645,690 635,690 635,770 582,760;630,770 630,835 625,835 625,945 610,950;615,425 610,500 600,550 587,570;615,425 690,430;685,430 685,500 678,560 680,620 700,650 735,655;685,505 710,510 728,560;705,425 740,430 740,515;635,660 660,680 680,700 680,620;635,770 655,770 690,710;700,650 705,720 690,750;655,770 670,830 685,835 692,750;640,900 660,880 670,840;580,460 595,460 592,530 582,550;430,160 450,160 452,80 470,75;430,240 450,250 455,310 432,300;440,330 470,330;450,340 455,370 475,415;590,280 598,340 600,380`;

const PROV={
grey:`A 585,1053 655,1053 655,1259 585,1259;655,1053 734,1053 734,1065 748,1072 755,1100 775,1108 790,1112 722,1175 724,1259 655,1259`,
red:`A 490,1054 585,1054 585,1259 541,1259 541,1232 490,1182`};
const US=`B 58,128 75,135 80,155 90,148 84,125 90,112 528,112 545,120 580,124 615,134 590,158 612,168 650,180 690,172 712,180 735,195 752,235 738,250 735,278 770,275 790,262 800,245 840,240 866,206 925,206 935,190 945,158 958,152 976,154 980,195 985,208 960,222 938,235 925,250 930,268 948,280 930,288 895,292 875,300 880,310 868,330 855,345 850,330 842,345 850,365 850,400 838,412 845,425 825,435 805,438 795,450 765,465 758,480 755,505 765,540 775,570 775,595 768,600 750,580 740,550 735,525 715,512 695,515 665,505 630,508 625,520 600,525 580,515 558,518 530,525 510,540 490,560 497,588 472,580 455,545 430,518 412,518 400,530 380,518 372,500 352,480 348,482 325,485 310,490 278,490 215,468 178,463 160,440 122,428 118,410 98,385 92,355 70,330 65,300 62,272 62,240 68,205 66,180`;
const USGREY=`B 390,252 480,252 512,262 527,315 423,315 423,295 390,295;423,317 530,317 541,335 541,377 423,377;310,295 421,295 421,377 310,377;310,379 405,379 405,476 350,476 325,482 310,488;543,390 618,390 615,405 600,440 600,457 553,457 553,445 545,440;772,275 850,275 860,290 855,305 860,320 772,320`;
const USLINES=`B 180,112 180,183;66,180 85,190 130,185 180,183 187,190 180,215 185,225 180,240 180,273;62,273 273,273;195,112 195,135 210,160 222,170 218,190 240,205 250,218 273,214;390,207 390,112;275,207 390,207 390,295 275,295 275,207;390,185 508,185;502,112 505,150 512,190 512,240;390,250 480,250 512,262;512,240 597,240;512,240 515,262 527,300 595,302;527,300 540,330 543,388 545,440;130,273 130,338 218,415;227,273 227,395 218,398 215,415 224,435 218,465;310,295 310,488;227,379 542,379;405,378 405,476 350,476;405,388 456,388 456,425 480,435 510,442 545,440;550,445 553,490 560,500 556,518;553,457 600,457;600,440 605,430 616,420;600,457 602,475 592,495 622,497 630,508;543,388 618,388;616,418 722,418;618,415 625,390 630,378 612,350;630,375 655,375;648,420 642,475 643,505;690,420 698,470 700,500 752,503;655,497 697,499;725,420 745,450 765,472;722,418 745,415 785,420 802,440;630,385 842,385;710,416 720,405 750,388;630,375 655,360 690,345 703,340 702,285;657,285 658,340 655,358;595,300 600,320 615,345 612,352;595,240 600,260 612,270 610,290 595,302;610,263 655,263;660,280 737,280;703,338 720,342 738,345 745,365 730,380 655,385;738,345 765,325 770,308 770,275;770,322 860,322;745,370 760,372 775,355 785,340 805,328;860,290 875,293;885,206 888,258 886,290;918,206 905,235 900,256;925,206 928,255;888,258 930,262;886,273 915,275 912,288;582,165 572,185 575,210 597,230 597,240;612,168 640,185 652,190 650,210;805,328 815,345 830,360`;
const LAKES=`B 578,168 600,150 625,140 640,120 655,112 675,116 690,135 705,160 702,178 670,178 655,168 640,174 618,160 598,168;655,282 650,245 655,210 668,192 702,182 695,192 680,205 678,240 682,262 670,282;700,180 725,176 745,185 757,200 752,235 740,240 738,262 733,270 736,240 722,215 722,195;752,178 772,188 775,205 762,196;727,272 745,268 770,258 795,248 800,258 775,275 745,287 727,280;795,232 815,228 842,230 838,240 810,244 795,242`;
const ONT=`A 790,1112 805,1128 825,1140 845,1144 848,1165 852,1185 858,1192 860,1215 870,1218 878,1250 883,1278 905,1305 915,1325 900,1337 880,1340 878,1355 855,1362 840,1375 842,1360 852,1350 850,1330 838,1312 820,1305 815,1285 805,1263 790,1265 765,1275 745,1270 730,1260 724,1258 722,1175`;
const RED=`A 886,984 893,990 978,1146 962,1148 985,1188 1072,1206 1076,1214 1060,1232 1040,1238 1010,1236 990,1240 982,1252 970,1265 962,1285 958,1298 952,1322 948,1326 917,1326 883,1278 870,1212 878,1195 876,1175 870,1152 885,1142 897,1125 897,1100 890,1085 880,1072 884,1050 880,1025 886,1005`;
const RED2=`A 965,1285 972,1268 990,1255 1010,1252 1016,1262 1008,1272;978,1285 1008,1274 1015,1290 1008,1310 998,1322 985,1318 978,1300;1015,1310 1020,1295 1035,1310 1050,1290 1055,1305 1040,1320 1020,1330 1002,1347 993,1340 1000,1328;1010,1240 1025,1242 1038,1252 1030,1256 1015,1250;866,1112 872,1108 882,1120 872,1130;864,1048 869,1045 866,1052;1050,1338 1055,1340 1051,1342;
B 950,1002 990,998 992,1010 1020,1018 1035,1005 1055,990 1040,968 1070,970 1095,960 1108,948 1115,960 1115,985 1130,1008 1165,998 1195,990 1230,992 1252,965 1262,990 1275,1005 1262,1025 1235,1052 1255,1050 1262,1064 1285,1072 1305,1045 1330,1045 1360,1062 1362,1080 1385,1072 1440,1078 1480,1110 1513,1118 1520,1150 1515,1170 1500,1190 1480,1215 1455,1240 1453,1300 1442,1350 1420,1395 1400,1408 1360,1415 1320,1440 1297,1455 1295,1505 1270,1540 1255,1545 1240,1568 1226,1605 1200,1575 1160,1545 1180,1510 1215,1485 1205,1460 1205,1430 1190,1425 1182,1400 1148,1395 1142,1352 1150,1330 1138,1298 1108,1296 1102,1252 1050,1232 1030,1220 1022,1188 1000,1192 965,1210 940,1207 940,1185 912,1190 890,1160 888,1145 905,1112 950,1098 958,1045 950,1030 958,1018;1268,1040 1298,1035 1285,1055 1265,1052;
D 95,370 122,362 108,395 143,398 135,415 115,440 148,455 155,480 170,505 175,535 205,540 200,560 180,572 195,582 150,588 130,590 90,605 115,580 130,570 100,565 95,560 115,545 108,530 140,525 135,495 120,485 120,472 95,475 105,450 85,438 95,415 80,405 88,385;15,500 30,500 40,480 65,470 77,485 75,500 72,525 70,548 45,560 12,568 25,545 12,525 25,515;
210,590 230,592 250,612 280,625 312,642 305,680 278,705 292,715 290,740 300,765 280,780 245,772 225,798 155,778 160,720 145,700 145,682 105,660 108,650 150,652 150,628 180,630 205,612;333,793 335,805 330,815 326,800;
1430,965 1470,968 1493,950 1500,975 1512,1005 1503,1030 1540,1052 C 830,1395 850,1410 888,1430 890,1475 870,1490 860,1510 835,1535 820,1550 817,1558 814,1591 796,1621 777,1584 764,1538 758,1489 D 1410,1205 1378,1227 1350,1205 1370,1190 1340,1180 1345,1168 1375,1165 1375,1140 1355,1115 1365,1100 1395,1095 1430,1050 1450,1015 1432,995;
C 886,1412 892,1425 905,1430 925,1425 945,1398 962,1408 950,1425 942,1450 930,1445 925,1475 913,1460 920,1440 903,1440 890,1430`;
const TAN=`D 25,785 45,770 100,775 150,778 228,800 225,812 190,830 172,860 178,880 155,905 120,920 80,932 65,912 52,905 60,880 58,850 70,825 62,808 32,805;297,722 318,712 350,710 360,692 385,693 402,705 400,715 385,720 382,750 400,770 420,800 440,815 450,820 485,850 455,850 465,870 450,892 455,860 430,845 400,820 375,805 360,785 350,755 335,750 310,760 297,750;320,832 338,830 340,865 325,872 322,850;390,897 432,895 430,918 405,908;222,858 230,856 228,862;
E 608,948 625,948 627,895 632,918 640,895 655,890 662,865 675,842 686,842 688,890 692,920 685,970 675,1015 660,1040 640,1045 625,1055 615,1030 615,990`;
const HOLES=`E 663,965 670,950 675,962 668,985;683,905 688,900 689,920 685,922`;
const VIOLET=`B 960,1212 985,1208 1000,1195 1023,1190 1028,1222 1050,1235 1100,1252 1108,1296 1138,1298 1150,1330 1142,1355 1120,1348 1082,1352 1072,1392 1045,1395 1040,1405 1032,1395 1010,1392 990,1410 980,1385 970,1340 958,1310 965,1290 960,1250 968,1232;
C 885,1133 920,1110 940,1115 943,1125 970,1122 972,1095 980,1090 1002,1100 1005,1115 1045,1115 1065,1132 1090,1130 1108,1118 1125,1125 1118,1152 1140,1152 1153,1168 1130,1175 1105,1195 1088,1198 1082,1220 1065,1230 1025,1240 1005,1228 955,1225 935,1205 908,1190 905,1160 888,1145;
D 435,1190 450,1183 580,1250 580,1315 565,1320 548,1365 560,1400 530,1425 495,1435 490,1448 445,1455 418,1420 440,1418 430,1375 408,1342 440,1298 440,1240`;
const GREEN=`E 1127,840 1145,815 1165,800 1172,760 1185,745 1200,710 1210,725 1215,690 1228,668 1248,685 1242,725 1258,755 1270,768 1275,720 1278,660 1288,710 1295,760 1300,800 1315,825 1325,870 1335,900 1337,945 1332,1000 1322,1050 1318,1108 1298,1132 1275,1130 1265,1105 1258,1070 1255,1010 1248,1050 1240,1050 1235,1015 1218,998 1190,1008 1178,1040 1155,1045 1145,1062 1133,1045 1135,1000 1130,940 1127,880;1291,1175 1309,1180 1307,1215 1300,1230 1293,1200`;

define('exposure-map',`<style>:host{display:block}svg{display:block;width:100%;height:auto;overflow:visible}</style><svg viewBox="1511 540 2329 1535" role="img" aria-label="Exposure map" stroke="#fff" stroke-width="2.500" stroke-linejoin="round"></svg>`,(h,r)=>{
 const G='#c8ccd5',R='#d86363',T='#e2bc87',V='#9673ca',N='#53a670',BG='#f9fafc';
 const p=(d,f,k,c=true,w)=>`<path d="${path(d,k,c)}" fill="${f}"${w?` stroke-width="${w}"`:''}/>`;
 r.querySelector('svg').innerHTML=p(LAND,G,.14)+p(WATER,BG,.12)+p(BORDERS,'none',.09,false)+p(PROV.grey,G,0)+p(PROV.red,R,0)+p(US,N,.1)+p(USLINES,'none',.03,false,2)+p(USGREY,G,.02)+p(ONT,T,.06)+p(LAKES,BG,.08)+p(RED,R,.03)+p(RED2,R,.12)+p(TAN,T,.12)+p(HOLES,G,.1)+p(VIOLET,V,.12)+p(GREEN,N,.14);
});

/* ---------- table ---------- */
define('eu-flag','<style>:host{display:block;width:60px;height:60px;flex:none}svg{display:block}</style><svg viewBox="-30 -30 60 60" aria-hidden="true"><circle r="30" fill="#039"/></svg>',(h,r)=>{
 let s='';for(let i=0;i<12;i++){const a=i*Math.PI/6,cx=18*Math.sin(a),cy=-18*Math.cos(a);let d='';for(let j=0;j<10;j++){const q=j*Math.PI/5,l=j%2?1.100:2.800;d+=(j?'L':'M')+(cx+l*Math.sin(q)).toFixed(2)+' '+(cy-l*Math.cos(q)).toFixed(2)}s+=`<path d="${d}Z" fill="#fc0"/>`}
 r.querySelector('svg').innerHTML+=s});
define('region-table',`<style>
:host{display:block;border:2px solid #e1e4ec;border-radius:16px;background:#fff;overflow:hidden}
table{width:100%;table-layout:fixed;border-collapse:collapse;font-size:24px;line-height:34px;font-weight:500;color:#000}
th,td{padding:0;text-align:left;white-space:nowrap}
th{height:78px;font-size:22px;line-height:30px;font-weight:400;color:#4e576a;border-bottom:2px solid #e1e4ec}
td{height:138px}
th:first-child,td:first-child{padding-left:43px}
.r{text-align:right}.c{text-align:center}
.dark{color:#2b3240;font-weight:500}
.flex{display:flex;align-items:center;gap:24px}
.two{display:flex;flex-direction:column;gap:8px;padding-bottom:6px}
a{color:#3a5c9c;font-weight:600;text-decoration:none}
small{font-size:21px;line-height:22px;font-weight:400;color:#5c6478}
.badge{display:inline-block;padding:9px 24px;border-radius:26px;background:#fae5e5;color:#a82c2c}
.info{gap:8px}.info ui-icon{width:28px;height:28px;--w:4}
.low{gap:20px;color:#2b3240;font-weight:400;padding-left:4px}
svg{display:block}
</style>
<table><colgroup><col style="width:20.1%"><col style="width:10.1%"><col style="width:13.3%"><col style="width:17.1%"><col style="width:10.8%"><col style="width:19%"><col></colgroup>
<thead><tr><th>Region</th><th>Status</th><th class="r">Estimated tax liability</th><th class="c">Trigger date</th><th class="r">Total transaction&nbsp; ($)</th><th class="c dark">Physical presence</th><th class="dark"><div class="flex info">Difficulty<ui-icon name="info"></ui-icon></div></th></tr></thead>
<tbody><tr><td><div class="flex"><eu-flag></eu-flag><div class="two"><a href="#">Europe</a><small>European Union</small></div></div></td>
<td><span class="badge">Exposed</span></td><td class="r"><div class="two">$19,306.85<small>€16,457.98</small></div></td><td class="c">18-Sep-2023</td><td class="r">€81,511.53</td><td class="c">No</td>
<td><div class="flex low"><svg width="26" height="28" viewBox="0 0 26 28" aria-hidden="true"><path d="M1 18h3v10H1z" fill="#6b7388"/><path d="M12 6h2v22h-2zM22 0h3v28h-3z" fill="#dfe3ea"/></svg>Low</div></td></tr></tbody></table>`);

/* ---------- popover ---------- */
define('detail-row',`<style>:host{display:flex;align-items:center;justify-content:space-between;height:102px;padding:0 22px;border-radius:20px;background:#f8f9fb;font-size:29px;line-height:40px;font-weight:300;color:#4f586c}
b{font-weight:600;color:#000;font-size:30px}::slotted(em){font-style:normal;font-weight:400}</style><span><slot></slot></span><b></b>`,(h,r)=>{r.querySelector('b').textContent=h.getAttribute('value')});
define('kr-flag','<style>:host{display:block;width:54px;height:54px;flex:none}svg{display:block}</style><svg viewBox="-27 -27 54 54" aria-hidden="true"><circle r="27" fill="#fff"/><g transform="rotate(20)"><circle r="12" fill="#0047a0"/><path d="M-12 0a12 12 0 0 1 24 0a6 6 0 0 1-12 0a6 6 0 0 0-12 0z" fill="#cd2e3a"/></g></svg>',(h,r)=>{
 let s='';for(const [x,y,a] of [[-18,-12,-56],[18,12,-56],[18,-12,56],[-18,12,56]]){s+=`<g transform="translate(${x} ${y}) rotate(${a})" fill="#000"><path d="M-5 -4.500h10v2h-10zM-5 -1h10v2h-10zM-5 2.500h10v2h-10z"/></g>`}
 r.querySelector('svg').innerHTML+=s});
define('region-popover',`<style>
:host{display:block;width:853px;border-radius:20px 20px 0 0;background:#fff;box-shadow:0 0 50px 2px rgb(224,178,122)}
header{display:flex;align-items:center;gap:20px;height:200px;box-sizing:border-box;padding:0 43px;border-radius:20px 20px 0 0;background:#20242c;color:#fff}
.t{flex:1;padding-top:10px}
h2{margin:0;font-size:39px;line-height:56px;font-weight:600}
p{margin:0;font-size:29px;line-height:56px;font-weight:300}
.pill{align-self:flex-start;margin-top:42px;padding:7px 23px;border-radius:27px;background:#e0e4ec;color:#4a5264;font-size:30px;line-height:40px}
.rows{display:flex;flex-direction:column;gap:22px;padding:43px 43px 42px}
</style>
<header><kr-flag></kr-flag><div class="t"><h2>Indonesia</h2><p>Indonesia</p></div><span class="pill">Not exposed</span></header>
<div class="rows">
<detail-row value="IDR 0">Total <em>taxable</em> amount:</detail-row>
<detail-row value="S$0">Total taxable volume ($):</detail-row>
<detail-row value="IDR 600,000,000">Volume ($) limit:</detail-row>
<detail-row value="0">Total taxable volume (#):</detail-row>
<detail-row value="-">Volume (#) limit:</detail-row>
<detail-row value="-">Breach type:</detail-row>
<detail-row value="No">Physical presence:</detail-row>
</div>`);

/* ---------- dotted backdrop ---------- */
define('dot-field',`<style>:host{display:block;position:absolute;inset:0;z-index:-1}svg{width:100%;height:100%;display:block}</style>
<svg viewBox="0 0 4800 2560" preserveAspectRatio="xMinYMin slice" aria-hidden="true"><defs><pattern id="d" width="62.400" height="54.670" patternUnits="userSpaceOnUse"><circle cx="3.300" cy="3.300" r="3.200" fill="#2b2d30"/></pattern></defs><rect width="4800" height="2560" fill="url(#d)"/><g></g></svg>`,(h,r)=>{
 let s='';[[1,[1,2,3,18,19,20]],[2,[2,3,4,17,18,19]],[3,[16,17,18]],[4,[15,16,17]],[5,[14,15,16]],[6,[13,14,15]],[7,[12,13,14]]].forEach(([y,xs])=>xs.forEach((x,i)=>{s+=`<circle cx="${3248.100+x*62.400}" cy="${3.300+y*54.670}" r="3.400" fill="${y>5&&i===2?'#fff':'#a3a4a6'}"/>`}));
 r.querySelector('g').innerHTML=s});

/* ---------- page ---------- */
define('monitor-page',`<style>
:host{display:block;position:relative;isolation:isolate;height:100vh;box-sizing:border-box;overflow:hidden;border-radius:26px;background:#151719;padding:103px 17.240% 0 16.830%}
.app{display:flex;height:calc(100vh - 97px);border-radius:24px;overflow:hidden;background:#f9fafc}
main{flex:1;min-width:0;padding:79px 113px 0}
h1{margin:0;font-size:53px;line-height:64px;font-weight:500;color:#000}
.sub{margin:14px 0 0;font-size:26px;line-height:36px;color:#67718a}
.bar{display:flex;align-items:center;justify-content:space-between;margin-top:75px}
h2{margin:0;font-size:34px;line-height:44px;font-weight:600;color:#2b3240}
select{appearance:none;width:236px;height:89px;border:2px solid #e1e4ec;border-radius:16px;background:#fff;padding:0 28px;color:#9aa2b4;font:400 29px/40px Inter,sans-serif}
.stats{display:grid;grid-template-columns:repeat(4,1fr);gap:32px}
region-table{margin-top:29px}
.float{position:absolute;left:5.370%;top:660px;width:754px;display:flex;flex-direction:column;gap:48px}
region-popover{position:absolute;right:2.420%;top:343px}
</style>
<dot-field></dot-field>
<div class="app"><side-bar></side-bar>
<main><h1>Monitor</h1><p class="sub">Keep track of your tax exposure around the world</p>
<div class="bar"><h2>Exposure map</h2><select aria-label="Region filter"><option>All</option></select></div>
<exposure-map></exposure-map>
<div class="stats"><stat-card tone="red" value="15">Exposed regions</stat-card><stat-card tone="amber" value="10" active>Approaching exposure</stat-card><stat-card tone="violet" value="8">Nexus triggered</stat-card><stat-card value="150">All regions</stat-card></div>
<region-table></region-table></main></div>
<div class="float"><stat-card size="large" tone="red" value="15">Exposed regions</stat-card><stat-card size="large" tone="amber" value="10" active>Approaching exposure</stat-card><stat-card size="large" tone="violet" value="8">Nexus triggered</stat-card></div>
<region-popover></region-popover>`);
</script>
</body>
</html>
